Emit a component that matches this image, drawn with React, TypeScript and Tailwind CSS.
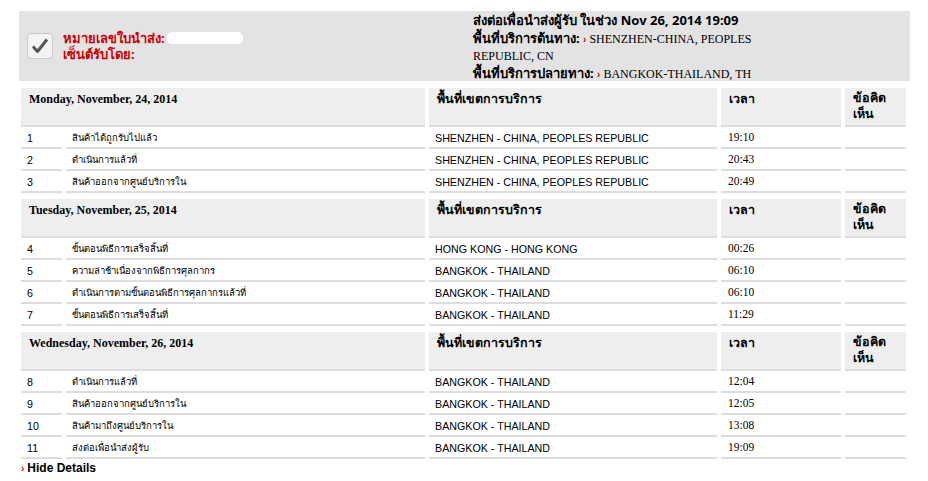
import React from 'react';

type Row = { n: number; desc: string; place: string; time: string };
type Day = { date: string; rows: Row[] };

const days: Day[] = [
  {
    date: 'Monday, November, 24, 2014',
    rows: [
      { n: 1, desc: 'สินค้าได้ถูกรับไปแล้ว', place: 'SHENZHEN - CHINA, PEOPLES REPUBLIC', time: '19:10' },
      { n: 2, desc: 'ดำเนินการแล้วที่', place: 'SHENZHEN - CHINA, PEOPLES REPUBLIC', time: '20:43' },
      { n: 3, desc: 'สินค้าออกจากศูนย์บริการใน', place: 'SHENZHEN - CHINA, PEOPLES REPUBLIC', time: '20:49' },
    ],
  },
  {
    date: 'Tuesday, November, 25, 2014',
    rows: [
      { n: 4, desc: 'ขั้นตอนพิธีการเสร็จสิ้นที่', place: 'HONG KONG - HONG KONG', time: '00:26' },
      { n: 5, desc: 'ความล่าช้าเนื่องจากพิธีการศุลกากร', place: 'BANGKOK - THAILAND', time: '06:10' },
      { n: 6, desc: 'ดำเนินการตามขั้นตอนพิธีการศุลกากรแล้วที่', place: 'BANGKOK - THAILAND', time: '06:10' },
      { n: 7, desc: 'ขั้นตอนพิธีการเสร็จสิ้นที่', place: 'BANGKOK - THAILAND', time: '11:29' },
    ],
  },
  {
    date: 'Wednesday, November, 26, 2014',
    rows: [
      { n: 8, desc: 'ดำเนินการแล้วที่', place: 'BANGKOK - THAILAND', time: '12:04' },
      { n: 9, desc: 'สินค้าออกจากศูนย์บริการใน', place: 'BANGKOK - THAILAND', time: '12:05' },
      { n: 10, desc: 'สินค้ามาถึงศูนย์บริการใน', place: 'BANGKOK - THAILAND', time: '13:08' },
      { n: 11, desc: 'ส่งต่อเพื่อนำส่งผู้รับ', place: 'BANGKOK - THAILAND', time: '19:09' },
    ],
  },
];

const thai = "font-['Tahoma','Noto_Sans','DejaVu_Sans',sans-serif]";
const serif = "font-['Liberation_Serif','Times_New_Roman',serif]";
const arial = "font-['Liberation_Sans','Arial',sans-serif]";

const Caret = () => <span className="text-[#cc0000] text-[10px] font-bold mr-[3px]">›</span>;

const th = 'bg-[#eeeeee] text-left align-top pl-[8px] pt-[2px] font-bold border-b-2 border-[#dddddd]';
const td = 'border-b-2 border-[#dddddd] pt-[2px]';

const DayTable = ({ d }: { d: Day }) => (
  <table className="w-[889px] border-separate border-spacing-x-[4px] border-spacing-y-0 -ml-[4px] table-fixed mb-[6px]">
    <colgroup>
      <col className="w-[41px]" />
      <col className="w-[359px]" />
      <col className="w-[288px]" />
      <col className="w-[120px]" />
      <col className="w-[61px]" />
    </colgroup>
    <tbody>
      <tr>
        <th colSpan={2} className={`${th} h-[39px] pt-[1px] text-[12px] ${serif}`}>{d.date}</th>
        <th className={`${th} text-[12.5px] ${thai}`}>พื้นที่เขตการบริการ</th>
        <th className={`${th} text-[12.5px] ${thai}`}>เวลา</th>
        <th className={`${th} text-[12.5px] leading-[16px] ${thai}`}>ข้อคิดเห็น</th>
      </tr>
      {d.rows.map((r) => (
        <tr key={r.n} className="h-[22px]">
          <td className={`${td} pl-[6px] text-[10.7px]`}>{r.n}</td>
          <td className={`${td} pl-[6px] text-[9.5px] ${thai}`}>{r.desc}</td>
          <td className={`${td} pl-[6px] text-[10.7px]`}>{r.place}</td>
          <td className={`${td} pl-[7px] text-[11.5px] ${serif}`}>{r.time}</td>
          <td className={td} />
        </tr>
      ))}
    </tbody>
  </table>
);

const App = () => {
  return (
    <div className={`w-[928px] h-[481px] bg-white text-black ${arial}`}>
      <div className="pt-[11px] pl-[19px] pr-[18px]">
        <div className="bg-[#e3e3e3] h-[70px] flex">
          <div className="w-[454px] flex items-center pl-[8px]">
            <div className="w-[26px] h-[26px] rounded-[4px] bg-[#f3f3f3] border border-[#c8c8c8] flex items-center justify-center">
              <svg width="18" height="16" viewBox="0 0 18 16">
                <path d="M2 8.5 L6.5 13.5 L16 1.5" fill="none" stroke="#555" strokeWidth="3" strokeLinejoin="round" />
              </svg>
            </div>
            <div className={`ml-[10px] text-[13px] leading-[16px] font-bold text-[#cc0000] ${thai}`}>
              <div className="flex items-center">
                หมายเลขใบนำส่ง:
                <span className="ml-[2px] inline-block w-[76px] h-[12px] bg-white rounded-[5px]" />
              </div>
              <div>เซ็นต์รับโดย:</div>
            </div>
          </div>
          <div className="w-[292px] pt-[1px] text-[13px] leading-[16px]">
            <div className={`font-bold ${thai}`}>ส่งต่อเพื่อนำส่งผู้รับ ในช่วง Nov 26, 2014 19:09</div>
            <div className="mt-[2px]">
              <span className={`font-bold ${thai}`}>พื้นที่บริการต้นทาง: </span>
              <Caret />
              <span className={`${serif} text-[12px]`}>SHENZHEN-CHINA, PEOPLES REPUBLIC, CN</span>
            </div>
            <div className="mt-[1px]">
              <span className={`font-bold ${thai}`}>พื้นที่บริการปลายทาง: </span>
              <Caret />
              <span className={`${serif} text-[12px]`}>BANGKOK-THAILAND, TH</span>
            </div>
          </div>
        </div>
      </div>

      <div className="pl-[21px] pt-[7px]">
        {days.map((d) => (
          <DayTable key={d.date} d={d} />
        ))}
        <div className="text-[12px] font-bold -mt-[6px] flex items-center">
          <Caret />
          Hide Details
        </div>
      </div>
    </div>
  );
};

export default App;
